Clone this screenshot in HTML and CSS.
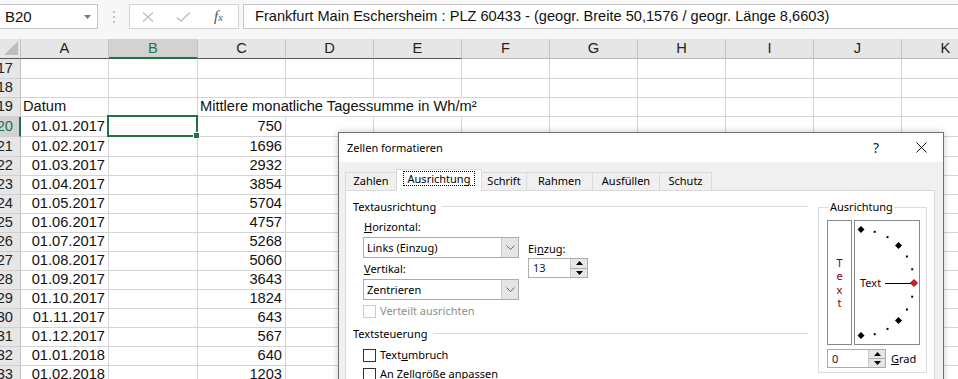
FILE: index.html
```html
<!DOCTYPE html>
<html lang="de">
<head>
  <meta charset="UTF-8" />
  <title>Zellen formatieren</title>
  <link rel="stylesheet" href="styles.css">
</head>
<body>
  <div class="formula-bar">
    <div class="name-box">
      <span>B20</span>
      <svg width="7" height="4" viewBox="0 0 7 4"><path d="M0 0h7L3.5 4z" fill="#777"/></svg>
    </div>
    <div class="grip">
      <svg width="2" height="12" viewBox="0 0 2 12"><rect y="0" width="2" height="2" fill="#c2c2c2"/><rect y="5" width="2" height="2" fill="#c2c2c2"/><rect y="10" width="2" height="2" fill="#c2c2c2"/></svg>
    </div>
    <div class="fx-buttons">
      <svg width="12" height="10" viewBox="0 0 12 10"><path d="M1 .5l10 9M11 .5l-10 9" stroke="#bdbdbd" stroke-width="1.2" fill="none"/></svg>
      <svg width="15" height="10" viewBox="0 0 15 10"><path d="M1 5.5l4 3.5 9-8.5" stroke="#bdbdbd" stroke-width="1.3" fill="none"/></svg>
      <span class="fx">f<sub>x</sub></span>
    </div>
    <div class="formula">Frankfurt Main Eschersheim : PLZ 60433 - (geogr. Breite 50,1576 / geogr. Länge 8,6603)</div>
  </div>

  <div class="sheet">
    <div class="row head">
      <div class="corner"><svg width="14" height="14" viewBox="0 0 14 14"><path d="M14 0v14H0z" fill="#bdbdbd"/></svg></div>
      <div class="dark">A</div><div class="dark sel">B</div><div class="dark">C</div><div class="dark">D</div><div class="dark">E</div>
      <div>F</div><div>G</div><div>H</div><div>I</div><div>J</div><div>K</div>
    </div>
    <div class="row tall">
      <div class="rh">17</div><div></div><div></div><div></div><div></div><div></div><div></div><div></div><div></div><div></div><div></div><div></div>
    </div>
    <div class="row">
      <div class="rh">18</div><div></div><div></div><div></div><div></div><div></div><div></div><div></div><div></div><div></div><div></div><div></div>
    </div>
    <div class="row">
      <div class="rh">19</div><div>Datum</div><div></div><div class="wide">Mittlere monatliche Tagessumme in Wh/m²</div><div></div><div></div><div></div><div></div><div></div>
    </div>
    <div class="row tall">
      <div class="rh sel">20</div><div class="num">01.01.2017</div><div class="active"></div><div class="num">750</div><div></div><div></div><div></div><div></div><div></div><div></div><div></div><div></div>
    </div>
    <div class="row tall">
      <div class="rh">21</div><div class="num">01.02.2017</div><div></div><div class="num">1696</div><div></div><div></div><div></div><div></div><div></div><div></div><div></div><div></div>
    </div>
    <div class="row">
      <div class="rh">22</div><div class="num">01.03.2017</div><div></div><div class="num">2932</div><div></div><div></div><div></div><div></div><div></div><div></div><div></div><div></div>
    </div>
    <div class="row">
      <div class="rh">23</div><div class="num">01.04.2017</div><div></div><div class="num">3854</div><div></div><div></div><div></div><div></div><div></div><div></div><div></div><div></div>
    </div>
    <div class="row">
      <div class="rh">24</div><div class="num">01.05.2017</div><div></div><div class="num">5704</div><div></div><div></div><div></div><div></div><div></div><div></div><div></div><div></div>
    </div>
    <div class="row">
      <div class="rh">25</div><div class="num">01.06.2017</div><div></div><div class="num">4757</div><div></div><div></div><div></div><div></div><div></div><div></div><div></div><div></div>
    </div>
    <div class="row">
      <div class="rh">26</div><div class="num">01.07.2017</div><div></div><div class="num">5268</div><div></div><div></div><div></div><div></div><div></div><div></div><div></div><div></div>
    </div>
    <div class="row">
      <div class="rh">27</div><div class="num">01.08.2017</div><div></div><div class="num">5060</div><div></div><div></div><div></div><div></div><div></div><div></div><div></div><div></div>
    </div>
    <div class="row">
      <div class="rh">28</div><div class="num">01.09.2017</div><div></div><div class="num">3643</div><div></div><div></div><div></div><div></div><div></div><div></div><div></div><div></div>
    </div>
    <div class="row">
      <div class="rh">29</div><div class="num">01.10.2017</div><div></div><div class="num">1824</div><div></div><div></div><div></div><div></div><div></div><div></div><div></div><div></div>
    </div>
    <div class="row">
      <div class="rh">30</div><div class="num">01.11.2017</div><div></div><div class="num">643</div><div></div><div></div><div></div><div></div><div></div><div></div><div></div><div></div>
    </div>
    <div class="row">
      <div class="rh">31</div><div class="num">01.12.2017</div><div></div><div class="num">567</div><div></div><div></div><div></div><div></div><div></div><div></div><div></div><div></div>
    </div>
    <div class="row">
      <div class="rh">32</div><div class="num">01.01.2018</div><div></div><div class="num">640</div><div></div><div></div><div></div><div></div><div></div><div></div><div></div><div></div>
    </div>
    <div class="row">
      <div class="rh">33</div><div class="num">01.02.2018</div><div></div><div class="num">1203</div><div></div><div></div><div></div><div></div><div></div><div></div><div></div><div></div>
    </div>
  </div>

  <!-- Format dialog -->
  <div class="dialog">
    <div class="title-bar">
      <span class="title">Zellen formatieren</span>
      <span class="help">?</span>
      <span class="close"><svg width="11" height="11" viewBox="0 0 11 11"><path d="M.5.5l10 10M10.5.5l-10 10" stroke="#111" stroke-width="1" fill="none"/></svg></span>
    </div>

    <div class="tabs">
      <div class="tab t-zahlen">Zahlen</div>
      <div class="tab t-ausr active"><span class="focus">Ausrichtung</span></div>
      <div class="tab t-schrift">Schrift</div>
      <div class="tab t-rahmen">Rahmen</div>
      <div class="tab t-fill">Ausfüllen</div>
      <div class="tab t-schutz">Schutz</div>
    </div>

    <div class="panel">
      <div class="left-col">
        <div class="section-head"><span>Textausrichtung</span><i></i></div>
        <div class="align-row">
          <div class="align-block">
            <div class="field-label"><u>H</u>orizontal:</div>
            <div class="select">
              <span>Links (Einzug)</span>
              <b><svg width="9" height="5" viewBox="0 0 9 5"><path d="M.5.5l4 4 4-4" stroke="#666" fill="none"/></svg></b>
            </div>
            <div class="field-label v-label"><u>V</u>ertikal:</div>
            <div class="select">
              <span>Zentrieren</span>
              <b><svg width="9" height="5" viewBox="0 0 9 5"><path d="M.5.5l4 4 4-4" stroke="#666" fill="none"/></svg></b>
            </div>
          </div>
          <div class="indent-block">
            <div class="indent-label">Ei<u>n</u>zug:</div>
            <div class="spin indent-spin">
              <span>13</span>
              <b>
                <em><svg width="7" height="4" viewBox="0 0 7 4"><path d="M0 4h7L3.5 0z" fill="#000"/></svg></em>
                <em><svg width="7" height="4" viewBox="0 0 7 4"><path d="M0 0h7L3.5 4z" fill="#000"/></svg></em>
              </b>
            </div>
          </div>
        </div>
        <label class="check disabled"><i></i>Verteilt ausrichten</label>

        <div class="section-head steuer"><span>Textsteuerung</span><i></i></div>
        <label class="check first"><i></i>Text<u>u</u>mbruch</label>
        <label class="check"><i></i><u>A</u>n Zellgröße anpassen</label>
      </div>

      <fieldset class="orient">
        <legend>Ausrichtung</legend>
        <div class="orient-boxes">
          <div class="vtext"><span>T</span><span>e</span><span>x</span><span>t</span></div>
          <div class="dial">
            <svg width="64" height="123" viewBox="0 0 64 123">
              <g fill="#000">
                <path d="M6 5l3.5 3.5L6 12 2.5 8.5z"/>
                <rect x="18.7" y="9.8" width="2" height="2"/>
                <rect x="31.5" y="15.1" width="2" height="2"/>
                <path d="M43.5 21l3.5 3.5-3.5 3.5-3.5-3.5z"/>
                <rect x="50.9" y="34.5" width="2" height="2"/>
                <rect x="56.2" y="47.3" width="2" height="2"/>
                <rect x="56.2" y="74.7" width="2" height="2"/>
                <rect x="50.9" y="87.5" width="2" height="2"/>
                <path d="M43.5 96l3.5 3.5-3.5 3.5-3.5-3.5z"/>
                <rect x="31.5" y="106.9" width="2" height="2"/>
                <rect x="18.7" y="112.2" width="2" height="2"/>
                <path d="M6 111l3.5 3.5L6 118l-3.5-3.5z"/>
              </g>
              <path d="M30 62.5h26" stroke="#000" stroke-width="1"/>
              <path d="M59 58.5l3.5 3.5-3.5 3.5-3.5-3.5z" fill="#e8141b" stroke="#5a0000" stroke-width=".8"/>
              <text x="5" y="66" class="dial-text">Text</text>
            </svg>
          </div>
        </div>
        <div class="grad-row">
          <div class="spin grad-spin">
            <span>0</span>
            <b>
              <em><svg width="7" height="4" viewBox="0 0 7 4"><path d="M0 4h7L3.5 0z" fill="#000"/></svg></em>
              <em><svg width="7" height="4" viewBox="0 0 7 4"><path d="M0 0h7L3.5 4z" fill="#000"/></svg></em>
            </b>
          </div>
          <span class="grad"><u>G</u>rad</span>
        </div>
      </fieldset>
    </div>
  </div>
</body>
</html>
```

FILE: styles.css
```css
/* Page */
body {
  margin: 0;
  width: 958px;
  height: 379px;
  overflow: hidden;
  position: relative;
  background: #fff;
  color: #111;
  font-family: "Liberation Sans", Arial, sans-serif;
}

/* Formula bar */
.formula-bar {
  display: flex;
  align-items: flex-start;
  height: 39px;
  padding-top: 4px;
  box-sizing: border-box;
  background: #f7f7f7;
}
.name-box {
  width: 98px;
  height: 25px;
  box-sizing: border-box;
  border: 1px solid #c6c6c6;
  border-left: none;
  background: #fff;
  display: flex;
  align-items: center;
  justify-content: space-between;
  padding: 0 6px 0 5px;
  font-size: 15px;
}
.name-box svg {
  margin-top: 1px;
}
.grip {
  width: 31px;
  height: 25px;
  display: flex;
  align-items: center;
  justify-content: center;
}
.fx-buttons {
  width: 110px;
  height: 25px;
  box-sizing: border-box;
  border: 1px solid #d4d4d4;
  background: #fff;
  display: flex;
  align-items: center;
  padding-left: 12px;
  gap: 22px;
}
.fx {
  font-family: "Liberation Serif", serif;
  font-style: italic;
  font-size: 15px;
  color: #555;
  margin-left: 1px;
}
.fx sub {
  font-size: 10px;
  vertical-align: 0;
}
.formula {
  flex: 1;
  height: 25px;
  box-sizing: border-box;
  margin-left: 4px;
  border: 1px solid #c6c6c6;
  border-right: none;
  background: #fff;
  padding-left: 11px;
  font-size: 14.6px;
  line-height: 23px;
  white-space: nowrap;
  overflow: hidden;
}

/* Sheet grid */
.sheet {
  font-size: 14.67px;
}
.row {
  display: grid;
  grid-template-columns: 21px 88px 89px 88px repeat(8, 88px);
  height: 19px;
}
.row.tall {
  height: 20px;
}
.row > div {
  box-sizing: border-box;
  border-right: 1px solid #d4d4d4;
  border-bottom: 1px solid #d4d4d4;
  padding: 0 3px 1px 2px;
  line-height: 17px;
  white-space: nowrap;
  display: flex;
  align-items: flex-end;
  min-width: 0;
}
.row > div.num {
  justify-content: flex-end;
}
.row > div.wide {
  grid-column: span 4;
}
.row > div.rh {
  background: #e6e6e6;
  border-right-color: #c2c2c2;
  border-bottom-color: #cfcfcf;
  justify-content: flex-end;
  padding-right: 7px;
  overflow: hidden;
  color: #222;
}
.row > div.rh.sel {
  background: #d2d2d2;
  color: #217346;
  border-right: 2px solid #217346;
  padding-right: 6px;
}
.row > div.active {
  position: relative;
}
.row > div.active::after {
  content: "";
  position: absolute;
  top: -2px;
  left: -2px;
  right: -1px;
  bottom: -1px;
  border: 2px solid #217346;
}
.row > div.active::before {
  content: "";
  position: absolute;
  right: -3px;
  bottom: -3px;
  width: 5px;
  height: 5px;
  background: #217346;
  border: 1px solid #fff;
  z-index: 1;
}

/* Column headers */
.row.head {
  height: 20px;
}
.row.head > div {
  background: #e6e6e6;
  border-right-color: #c4c4c4;
  border-bottom-color: #b8b8b8;
  justify-content: center;
  align-items: center;
  padding: 0;
  color: #222;
}
.row.head > div.dark {
  border-bottom-color: #555;
}
.row.head > div.sel {
  background: #d2d2d2;
  color: #217346;
  border-bottom: 2px solid #217346;
}
.row.head > div.corner {
  justify-content: flex-end;
  align-items: flex-end;
  padding: 0 2px 3px 0;
  border-bottom-color: #555;
}

/* Dialog */
.dialog {
  position: absolute;
  left: 338px;
  top: 132px;
  width: 606px;
  height: 262px;
  box-sizing: border-box;
  border: 1px solid #707070;
  background: #f0f0f0;
  box-shadow: 0 0 7px rgba(0, 0, 0, 0.22);
  font-family: "Noto Sans", sans-serif;
  font-size: 11px;
  color: #000;
  z-index: 5;
}
.title-bar {
  height: 29px;
  background: #fff;
  display: flex;
  align-items: center;
  padding-left: 8px;
}
.title {
  flex: 1;
}
.help {
  width: 46px;
  text-align: center;
  font-size: 14px;
  color: #222;
}
.close {
  width: 44px;
  display: flex;
  justify-content: center;
}

/* Tabs */
.tabs {
  display: flex;
  align-items: flex-end;
  height: 28px;
  padding-left: 6px;
}
.tab {
  height: 18px;
  box-sizing: border-box;
  border: 1px solid #d9d9d9;
  border-bottom: none;
  border-left: none;
  line-height: 16px;
  text-align: center;
  background: #f0f0f0;
}
.t-zahlen { width: 52px; border-left: 1px solid #d9d9d9; }
.t-schrift { width: 45px; }
.t-rahmen { width: 66px; }
.t-fill { width: 67px; }
.t-schutz { width: 52px; }
.tab.active {
  width: 86px;
  height: 22px;
  margin-bottom: -1px;
  margin-left: -1px;
  border-left: 1px solid #d9d9d9;
  background: #fff;
  position: relative;
  z-index: 1;
  line-height: 18px;
}
.focus {
  display: inline-block;
  margin-top: 2px;
  padding: 0 4px;
  line-height: 13px;
  outline: 1px dotted #000;
}

/* Panel */
.panel {
  margin-left: 6px;
  width: 590px;
  height: 200px;
  box-sizing: border-box;
  border: 1px solid #d9d9d9;
  background: #fff;
  display: flex;
  align-items: flex-start;
  padding: 8px 7px 0 7px;
}
.left-col {
  width: 455px;
  margin-right: 10px;
}
.section-head {
  display: flex;
  align-items: center;
  line-height: 16px;
}
.section-head i {
  flex: 1;
  border-top: 1px solid #dcdcdc;
  margin-left: 6px;
  margin-top: -1px;
}
.section-head.steuer {
  margin-top: 7px;
}
.align-row {
  display: flex;
  margin-top: 4px;
}
.align-block {
  width: 166px;
}
.field-label {
  padding-left: 11px;
  line-height: 16px;
}
.v-label {
  margin-top: 3px;
}
.select {
  margin: 2px 0 0 10px;
  height: 21px;
  box-sizing: border-box;
  border: 1px solid #acacac;
  background: #fff;
  display: flex;
  align-items: stretch;
}
.select span {
  flex: 1;
  padding-left: 3px;
  line-height: 19px;
}
.select b {
  width: 16px;
  background: #e5e5e5;
  border-left: 1px solid #c8c8c8;
  display: flex;
  align-items: center;
  justify-content: center;
}
.indent-block {
  margin-left: 9px;
  padding-top: 22px;
}
.indent-label {
  line-height: 16px;
}
.spin {
  height: 20px;
  box-sizing: border-box;
  border: 1px solid #acacac;
  background: #fff;
  display: flex;
}
.spin span {
  flex: 1;
  padding-left: 4px;
  line-height: 18px;
  color: #0c1a33;
}
.spin b {
  width: 16px;
  display: flex;
  flex-direction: column;
  border-left: 1px solid #c8c8c8;
}
.spin em {
  flex: 1;
  background: #e6e6e6;
  display: flex;
  align-items: center;
  justify-content: center;
}
.spin em + em {
  border-top: 1px solid #acacac;
}
.indent-spin {
  width: 60px;
  margin-top: 1px;
}
.check {
  display: flex;
  align-items: center;
  line-height: 16px;
  margin-left: 10px;
  margin-top: 3px;
}
.check i {
  width: 13px;
  height: 13px;
  box-sizing: border-box;
  border: 1px solid #333;
  background: #fff;
  margin-right: 4px;
}
.check.first {
  margin-top: 5px;
}
.check.disabled {
  color: #8d8d8d;
}
.check.disabled i {
  border-color: #cccccc;
}

/* Orientation group */
.orient {
  width: 109px;
  box-sizing: border-box;
  margin: 0;
  padding: 5px 6px 4px 8px;
  border: 1px solid #dcdcdc;
}
.orient legend {
  padding: 0 1px;
  margin-left: 2px;
  line-height: 16px;
}
.orient-boxes {
  display: flex;
  gap: 2px;
}
.vtext {
  width: 25px;
  height: 125px;
  box-sizing: border-box;
  border: 1px solid #888;
  display: flex;
  flex-direction: column;
  align-items: center;
  justify-content: center;
  color: #800000;
  line-height: 13.3px;
}
.dial {
  width: 66px;
  height: 125px;
  box-sizing: border-box;
  border: 1px solid #888;
}
.dial svg {
  display: block;
}
.dial-text {
  font-family: "Noto Sans", sans-serif;
  font-size: 11px;
  fill: #2a0a0a;
}
.grad-row {
  display: flex;
  align-items: center;
  margin-top: 4px;
}
.grad-spin {
  width: 59px;
  height: 19px;
}
.grad-spin span {
  line-height: 17px;
}
.grad {
  margin-left: 5px;
}
```
